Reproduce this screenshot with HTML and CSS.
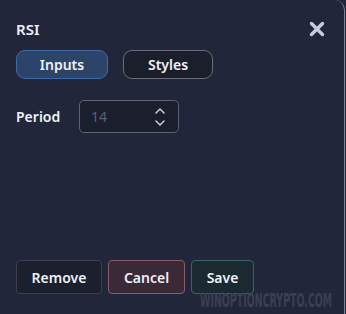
FILE: index.html
```html
<!DOCTYPE html>
<html lang="en">
<head>
  <meta charset="UTF-8" />
  <title>RSI</title>
  <link rel="stylesheet" href="styles.css">
</head>
<body>
  <div class="dialog">
    <header>
      <div class="title">RSI</div>
      <button class="close" aria-label="Close">
        <svg width="16" height="16" viewBox="0 0 16 16">
          <path d="M2.5 2.5 L13.5 13.5 M13.5 2.5 L2.5 13.5" stroke="#c3cde0" stroke-width="3.4" stroke-linecap="round"/>
        </svg>
      </button>
    </header>
    <div class="tabs">
      <button class="tab active">Inputs</button>
      <button class="tab">Styles</button>
    </div>
    <div class="field">
      <label>Period</label>
      <div class="number">
        <span class="value">14</span>
        <span class="spin">
          <svg width="12" height="24" viewBox="0 0 12 24">
            <path d="M2 8 L6 4 L10 8 M2 16 L6 20 L10 16" fill="none" stroke="#c9cfdc" stroke-width="1.5" stroke-linecap="round" stroke-linejoin="round"/>
          </svg>
        </span>
      </div>
    </div>
    <footer>
      <button class="btn remove">Remove</button>
      <button class="btn cancel">Cancel</button>
      <button class="btn save">Save</button>
    </footer>
    <div class="watermark">WINOPTIONCRYPTO.COM</div>
  </div>
</body>
</html>
```

FILE: styles.css
```css
body {
  margin: 0;
  background: #22263a;
  font-family: "Noto Sans", "Open Sans", sans-serif;
  color: #eef1f6;
  overflow: hidden;
}
.dialog {
  position: relative;
  box-sizing: border-box;
  width: 345px;
  height: 314px;
  padding: 18px 16px 0 16px;
  background: #22263a;
  border-right: 1px solid #7c8194;
  border-top-right-radius: 10px;
  display: flex;
  flex-direction: column;
  overflow: hidden;
}
header {
  display: flex;
  justify-content: space-between;
  align-items: center;
  height: 22px;
}
.title {
  font-size: 15px;
  font-weight: 600;
}
.close {
  background: none;
  border: none;
  padding: 0;
  margin-right: 3px;
  display: flex;
  cursor: pointer;
}
.tabs {
  display: flex;
  gap: 15px;
  margin-top: 10px;
}
.tab {
  box-sizing: border-box;
  height: 29px;
  width: 90px;
  border-radius: 9px;
  border: 1px solid #6a6e7c;
  background: #1b1e2b;
  color: #eef1f6;
  font-family: inherit;
  font-size: 14px;
  font-weight: 600;
  cursor: pointer;
}
.tab.active {
  width: 92px;
  background: #2c4468;
  border-color: #3e6aa6;
}
.field {
  display: flex;
  align-items: center;
  margin-top: 21px;
}
.field label {
  font-size: 14px;
  font-weight: 600;
  width: 63px;
}
.number {
  box-sizing: border-box;
  width: 100px;
  height: 33px;
  border: 1px solid #5d6272;
  border-radius: 5px;
  background: #1b1e2d;
  display: flex;
  align-items: center;
  justify-content: space-between;
  padding: 0 12px 0 11px;
}
.value {
  color: #5b6071;
  font-size: 14px;
}
.spin {
  display: flex;
}
footer {
  display: flex;
  gap: 6px;
  margin-top: auto;
  margin-bottom: 20px;
}
.btn {
  box-sizing: border-box;
  height: 34px;
  border-radius: 4px;
  font-family: inherit;
  font-size: 14px;
  font-weight: 600;
  color: #eef1f6;
  cursor: pointer;
  padding: 0;
}
.remove {
  width: 86px;
  background: #1c1f2e;
  border: 1px solid #3b4050;
}
.cancel {
  width: 77px;
  background: #3a2937;
  border: 1px solid #8a5a68;
}
.save {
  width: 63px;
  background: #1b2a30;
  border: 1px solid #3d6463;
}
.watermark {
  position: absolute;
  left: 200px;
  top: 289px;
  font-family: "DejaVu Sans Condensed", "DejaVu Sans", sans-serif;
  font-weight: 700;
  font-size: 20px;
  line-height: 22px;
  white-space: nowrap;
  color: #3a3f54;
  transform: scaleX(0.525);
  transform-origin: left center;
}
```
